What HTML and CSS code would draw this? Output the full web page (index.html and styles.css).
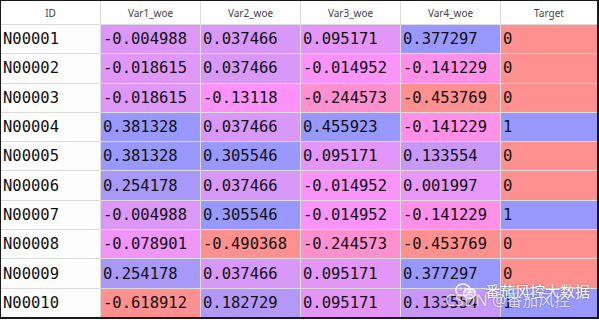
FILE: index.html
```html
<!DOCTYPE html>
<html>
<head>
<meta charset="utf-8">
<link rel="stylesheet" href="styles.css">
</head>
<body>
<div class="frame">
  <div class="grid">
    <div class="th">ID</div><div class="th">Var1_woe</div><div class="th">Var2_woe</div><div class="th">Var3_woe</div><div class="th">Var4_woe</div><div class="th">Target</div>

    <div class="td id">N00001</div><div class="td" style="background:#dc98f8">-0.004988</div><div class="td" style="background:#d898f8">0.037466</div><div class="td" style="background:#e496f8">0.095171</div><div class="td" style="background:#9898ff">0.377297</div><div class="td" style="background:#ff9090">0</div>

    <div class="td id">N00002</div><div class="td" style="background:#e098f8">-0.018615</div><div class="td" style="background:#d898f8">0.037466</div><div class="td" style="background:#fa94fa">-0.014952</div><div class="td" style="background:#ff90e8">-0.141229</div><div class="td" style="background:#ff9090">0</div>

    <div class="td id">N00003</div><div class="td" style="background:#e098f8">-0.018615</div><div class="td" style="background:#ff92f8">-0.13118</div><div class="td" style="background:#ff90d0">-0.244573</div><div class="td" style="background:#ff9090">-0.453769</div><div class="td" style="background:#ff9090">0</div>

    <div class="td id">N00004</div><div class="td" style="background:#9898ff">0.381328</div><div class="td" style="background:#d898f8">0.037466</div><div class="td" style="background:#9898ff">0.455923</div><div class="td" style="background:#ff90e8">-0.141229</div><div class="td" style="background:#9898ff">1</div>

    <div class="td id">N00005</div><div class="td" style="background:#9898ff">0.381328</div><div class="td" style="background:#9898ff">0.305546</div><div class="td" style="background:#e496f8">0.095171</div><div class="td" style="background:#c898f8">0.133554</div><div class="td" style="background:#ff9090">0</div>

    <div class="td id">N00006</div><div class="td" style="background:#a898f8">0.254178</div><div class="td" style="background:#d898f8">0.037466</div><div class="td" style="background:#fa94fa">-0.014952</div><div class="td" style="background:#e898f8">0.001997</div><div class="td" style="background:#ff9090">0</div>

    <div class="td id">N00007</div><div class="td" style="background:#dc98f8">-0.004988</div><div class="td" style="background:#9898ff">0.305546</div><div class="td" style="background:#fa94fa">-0.014952</div><div class="td" style="background:#ff90e8">-0.141229</div><div class="td" style="background:#9898ff">1</div>

    <div class="td id">N00008</div><div class="td" style="background:#f096f8">-0.078901</div><div class="td" style="background:#ff9090">-0.490368</div><div class="td" style="background:#ff90d0">-0.244573</div><div class="td" style="background:#ff9090">-0.453769</div><div class="td" style="background:#ff9090">0</div>

    <div class="td id">N00009</div><div class="td" style="background:#a898f8">0.254178</div><div class="td" style="background:#d898f8">0.037466</div><div class="td" style="background:#e496f8">0.095171</div><div class="td" style="background:#9898ff">0.377297</div><div class="td" style="background:#ff9090">0</div>

    <div class="td id">N00010</div><div class="td" style="background:#ff9090">-0.618912</div><div class="td" style="background:#b498f8">0.182729</div><div class="td" style="background:#e496f8">0.095171</div><div class="td" style="background:#c898f8">0.133554</div><div class="td" style="background:#9898ff">1</div>
  </div>
  <div class="watermark">
    <svg class="wx" width="22" height="17" viewBox="0 0 22 17">
      <ellipse cx="8" cy="7" rx="7.2" ry="6" fill="none" stroke="#ffffff" stroke-width="1.4"/>
      <ellipse cx="14.5" cy="10.5" rx="6" ry="5" fill="rgba(255,255,255,0.35)" stroke="#ffffff" stroke-width="1.4"/>
      <circle cx="5.5" cy="5.5" r="0.9" fill="#fff"/>
      <circle cx="10" cy="5.5" r="0.9" fill="#fff"/>
      <circle cx="12.5" cy="9.5" r="0.8" fill="#fff"/>
      <circle cx="16.5" cy="9.5" r="0.8" fill="#fff"/>
    </svg>
    <span class="wm-name">番茄风控大数据</span>
  </div>
  <div class="csdn">CSDN @番茄风控</div>
</div>
</body>
</html>
```
FILE: styles.css
```css
html, body {
  margin: 0;
  padding: 0;
  background: #ffffff;
}
.frame {
  position: relative;
  width: 599px;
  height: 319px;
  box-sizing: border-box;
  border-top: 1px solid #1a1a1a;
  border-left: 1px solid #1a1a1a;
  border-right: 2px solid #1a1a1a;
  border-bottom: 2px solid #1a1a1a;
  overflow: hidden;
}
.grid {
  display: grid;
  grid-template-columns: 99px 99px 99px 99px 99px 1fr;
  grid-template-rows: 23px repeat(10, 1fr);
  gap: 1px;
  background: #dcdcdc;
  height: 100%;
}
.th {
  background: #ffffff;
  font-family: "Noto Sans", "Open Sans", sans-serif;
  font-size: 10px;
  color: #444;
  display: flex;
  align-items: center;
  justify-content: center;
}
.td {
  background: #ffffff;
  font-family: "DejaVu Sans Mono", "Liberation Mono", monospace;
  font-size: 15.5px;
  color: #111;
  display: flex;
  align-items: center;
  padding-left: 2px;
}
.td.id {
  background: #fdfdfd;
}
.watermark {
  position: absolute;
  left: 454px;
  top: 280px;
  display: flex;
  align-items: center;
  gap: 8px;
}
.wm-name {
  font-family: "Noto Sans CJK SC", sans-serif;
  font-size: 15px;
  color: #ffffff;
  text-shadow: 0 0 2px rgba(0,0,0,0.45);
  line-height: 20px;
}
.csdn {
  position: absolute;
  left: 444px;
  top: 289px;
  font-family: "Noto Sans", "Noto Sans CJK SC", sans-serif;
  font-size: 16px;
  color: rgba(255,255,255,0.75);
  text-shadow: 0 0 2px rgba(0,0,0,0.35);
  line-height: 20px;
}
```
